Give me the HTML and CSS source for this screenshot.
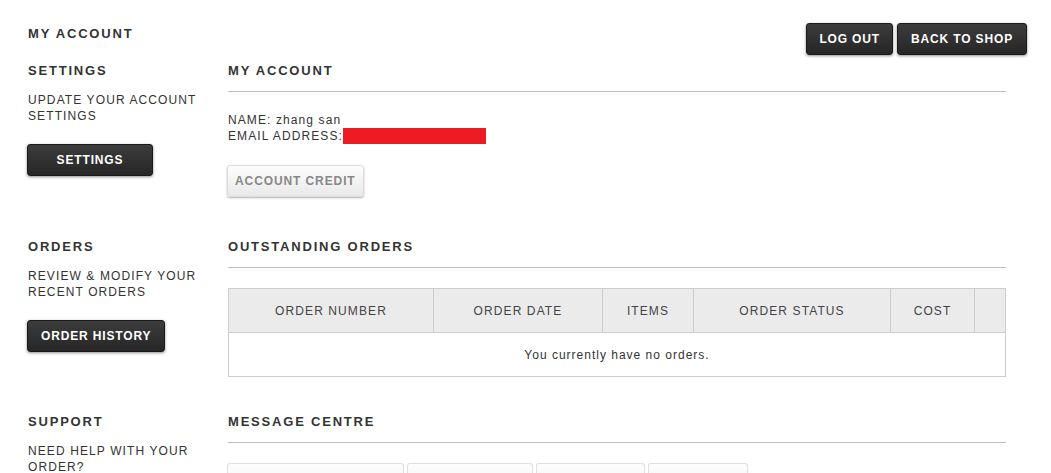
FILE: index.html
```html
<!DOCTYPE html>
<html>
<head>
<meta charset="utf-8">
<link rel="stylesheet" href="styles.css">
</head>
<body>
<div class="topstrip"><span class="topstrip-text">LIFE</span></div>
<header class="page-head">
  <h1 class="page-title">MY ACCOUNT</h1>
  <div class="actions">
    <a class="btn-dark btn-logout" href="#">LOG OUT</a>
    <a class="btn-dark" href="#">BACK TO SHOP</a>
  </div>
</header>
<main class="layout">
  <section class="row">
    <div class="side">
      <h2 class="side-title">SETTINGS</h2>
      <p class="side-text">UPDATE YOUR ACCOUNT<br>SETTINGS</p>
      <a class="btn-dark btn-wide" href="#">SETTINGS</a>
    </div>
    <div class="content">
      <h2 class="content-title">MY ACCOUNT</h2>
      <div class="details">
        <div>NAME: zhang san</div>
        <div>EMAIL ADDRESS:<span class="redact"></span></div>
      </div>
      <a class="btn-light" href="#">ACCOUNT CREDIT</a>
    </div>
  </section>
  <section class="row">
    <div class="side">
      <h2 class="side-title">ORDERS</h2>
      <p class="side-text">REVIEW &amp; MODIFY YOUR<br>RECENT ORDERS</p>
      <a class="btn-dark" href="#">ORDER HISTORY</a>
    </div>
    <div class="content">
      <h2 class="content-title">OUTSTANDING ORDERS</h2>
      <table class="orders">
        <colgroup>
          <col class="c1"><col class="c2"><col class="c3"><col class="c4"><col class="c5"><col class="c6">
        </colgroup>
        <thead>
          <tr><th>ORDER NUMBER</th><th>ORDER DATE</th><th>ITEMS</th><th>ORDER STATUS</th><th>COST</th><th></th></tr>
        </thead>
        <tbody>
          <tr><td colspan="6">You currently have no orders.</td></tr>
        </tbody>
      </table>
    </div>
  </section>
  <section class="row">
    <div class="side">
      <h2 class="side-title">SUPPORT</h2>
      <p class="side-text">NEED HELP WITH YOUR<br>ORDER?</p>
    </div>
    <div class="content">
      <h2 class="content-title">MESSAGE CENTRE</h2>
      <div class="tabs">
        <span class="tab t1"></span><span class="tab t2"></span><span class="tab t3"></span><span class="tab t4"></span>
      </div>
    </div>
  </section>
</main>
</body>
</html>
```

FILE: styles.css
```css
html, body {
  margin: 0;
  padding: 0;
  background: #fff;
  overflow: hidden;
}
body {
  font-family: "Liberation Sans", Arial, sans-serif;
  color: #333;
  font-size: 12px;
  letter-spacing: 1px;
}
.topstrip {
  height: 4px;
  overflow: hidden;
  padding-left: 310px;
}
.topstrip-text {
  display: block;
  font-size: 12px;
  line-height: 12px;
  margin-top: -10px;
  color: #333;
  letter-spacing: 1px;
}
.page-head {
  display: flex;
  justify-content: space-between;
  align-items: flex-start;
  padding: 19px 24px 0 28px;
  height: 39px;
}
.page-title {
  margin: 3px 0 0;
  font-size: 13px;
  line-height: 16px;
  font-weight: bold;
  letter-spacing: 1.8px;
  color: #333;
}
.actions {
  display: flex;
  gap: 4px;
}
.btn-dark {
  display: inline-block;
  box-sizing: border-box;
  height: 32px;
  line-height: 30px;
  padding: 0 13px;
  background: linear-gradient(#3c3c3c, #262626);
  border: 1px solid #1a1a1a;
  border-radius: 3px;
  box-shadow: 0 1px 3px rgba(0,0,0,0.45);
  color: #fff;
  font-weight: bold;
  font-size: 12px;
  letter-spacing: 0.85px;
  text-decoration: none;
  text-align: center;
}
.btn-logout {
  padding: 0 12px;
}
.btn-wide {
  width: 126px;
}
.layout {
  padding-left: 28px;
  margin-top: 1px;
}
.row {
  display: grid;
  grid-template-columns: 200px 778px;
  height: 176px;
}
.row:nth-child(2) {
  height: 175px;
}
.side .btn-dark {
  margin-left: -1px;
}
.side-title, .content-title {
  margin: 0;
  font-size: 13px;
  line-height: 16px;
  font-weight: bold;
  letter-spacing: 1.8px;
  color: #333;
}
.side-text {
  margin: 13px 0 20px;
  line-height: 16px;
  letter-spacing: 1.1px;
  color: #333;
}
.content-title {
  padding-bottom: 12px;
  border-bottom: 1px solid #bdbdbd;
  margin-bottom: 20px;
}
.details {
  line-height: 16px;
  letter-spacing: 1.1px;
  margin-bottom: 21px;
}
.redact {
  display: inline-block;
  vertical-align: top;
  width: 143px;
  height: 16px;
  background: #ed1c24;
}
.btn-light {
  display: inline-block;
  box-sizing: border-box;
  height: 32px;
  line-height: 30px;
  padding: 0 7px;
  margin-left: -1px;
  background: linear-gradient(#fdfdfd, #e9e9e9);
  border: 1px solid #dcdcdc;
  border-radius: 3px;
  box-shadow: 0 1px 2px rgba(0,0,0,0.3);
  color: #888;
  font-weight: bold;
  font-size: 12px;
  letter-spacing: 0.9px;
  text-decoration: none;
}
.orders {
  width: 777px;
  border-collapse: collapse;
  table-layout: fixed;
}
.orders .c1 { width: 205px; }
.orders .c2 { width: 169px; }
.orders .c3 { width: 91px; }
.orders .c4 { width: 197px; }
.orders .c5 { width: 84px; }
.orders .c6 { width: 31px; }
.orders th {
  background: #ebebeb;
  border: 1px solid #cdcdcd;
  height: 43px;
  padding: 0;
  font-weight: normal;
  font-size: 12px;
  letter-spacing: 1.1px;
  color: #444;
  text-align: center;
}
.orders td {
  border: 1px solid #cdcdcd;
  height: 43px;
  padding: 0;
  text-align: center;
  font-size: 12px;
  letter-spacing: 1px;
  color: #333;
}
.tabs {
  display: flex;
  gap: 3px;
  margin-left: -1px;
}
.tab {
  display: block;
  height: 20px;
  box-sizing: border-box;
  border: 1px solid #e0e0e0;
  border-bottom: none;
  border-radius: 3px 3px 0 0;
  background: linear-gradient(#fefefe, #f3f3f3);
  box-shadow: 0 0 1px rgba(0,0,0,0.1);
}
.t1 { width: 177px; }
.t2 { width: 126px; }
.t3 { width: 109px; }
.t4 { width: 100px; }
```
